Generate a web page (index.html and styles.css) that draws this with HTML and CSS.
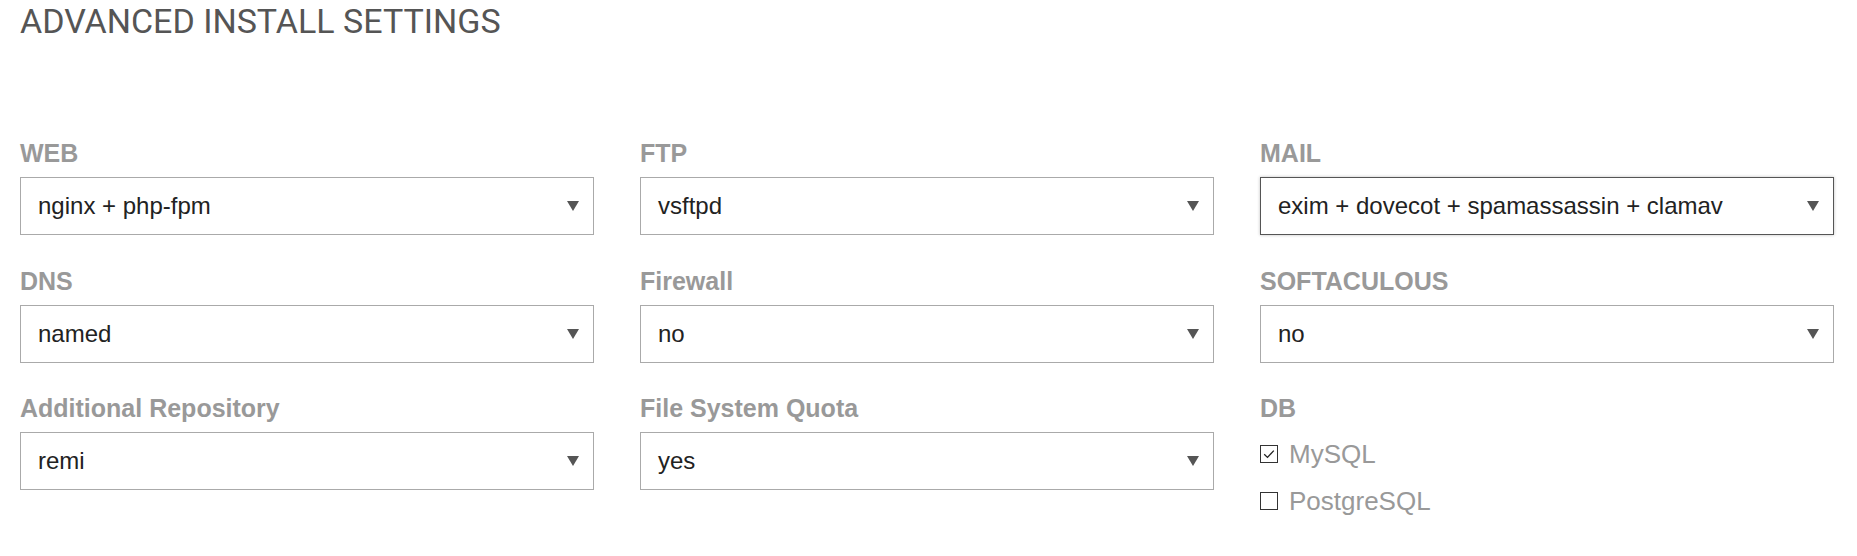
FILE: index.html
```html
<!DOCTYPE html>
<html>
<head>
<meta charset="utf-8">
<link rel="stylesheet" href="styles.css">
</head>
<body>
<div class="page">
  <h1 class="title">ADVANCED INSTALL SETTINGS</h1>
  <div class="grid">
    <div class="field">
      <div class="label">WEB</div>
      <div class="select"><span>nginx + php-fpm</span><svg class="arrow" viewBox="0 0 12 10" width="12" height="10"><path d="M0 0H12L6 10Z"/></svg></div>
    </div>
    <div class="field">
      <div class="label">FTP</div>
      <div class="select"><span>vsftpd</span><svg class="arrow" viewBox="0 0 12 10" width="12" height="10"><path d="M0 0H12L6 10Z"/></svg></div>
    </div>
    <div class="field">
      <div class="label">MAIL</div>
      <div class="select focused"><span>exim + dovecot + spamassassin + clamav</span><svg class="arrow" viewBox="0 0 12 10" width="12" height="10"><path d="M0 0H12L6 10Z"/></svg></div>
    </div>
    <div class="field">
      <div class="label">DNS</div>
      <div class="select"><span>named</span><svg class="arrow" viewBox="0 0 12 10" width="12" height="10"><path d="M0 0H12L6 10Z"/></svg></div>
    </div>
    <div class="field">
      <div class="label">Firewall</div>
      <div class="select"><span>no</span><svg class="arrow" viewBox="0 0 12 10" width="12" height="10"><path d="M0 0H12L6 10Z"/></svg></div>
    </div>
    <div class="field">
      <div class="label">SOFTACULOUS</div>
      <div class="select"><span>no</span><svg class="arrow" viewBox="0 0 12 10" width="12" height="10"><path d="M0 0H12L6 10Z"/></svg></div>
    </div>
    <div class="field">
      <div class="label">Additional Repository</div>
      <div class="select"><span>remi</span><svg class="arrow" viewBox="0 0 12 10" width="12" height="10"><path d="M0 0H12L6 10Z"/></svg></div>
    </div>
    <div class="field">
      <div class="label">File System Quota</div>
      <div class="select"><span>yes</span><svg class="arrow" viewBox="0 0 12 10" width="12" height="10"><path d="M0 0H12L6 10Z"/></svg></div>
    </div>
    <div class="field">
      <div class="label">DB</div>
      <div class="checks">
        <label class="check"><span class="box"><svg viewBox="0 0 16 16" width="16" height="16"><path d="M3.2 8.2L6.5 11.4L12.8 4.6" fill="none" stroke="#222" stroke-width="1.3"/></svg></span><span class="check-text">MySQL</span></label>
        <label class="check"><span class="box"></span><span class="check-text">PostgreSQL</span></label>
      </div>
    </div>
  </div>
</div>
</body>
</html>
```
FILE: styles.css
```css
html, body {
  margin: 0;
  padding: 0;
  background: #fff;
}
.page {
  padding: 2px 0 0 20px;
  font-family: "Liberation Sans", Arial, sans-serif;
}
.title {
  margin: 0;
  font-family: Roboto, "Liberation Sans", sans-serif;
  font-weight: 400;
  font-size: 34px;
  line-height: 39px;
  color: #555;
}
.grid {
  margin-top: 98px;
  display: grid;
  grid-template-columns: repeat(3, 574px);
  column-gap: 46px;
  row-gap: 31.5px;
}
.field {
  display: flex;
  flex-direction: column;
}
.label {
  font-weight: 700;
  font-size: 25px;
  line-height: 28px;
  color: #999;
  margin-bottom: 10px;
}
.select {
  box-sizing: border-box;
  height: 58px;
  border: 1px solid #aaa;
  background: #fff;
  display: flex;
  align-items: center;
  justify-content: space-between;
  padding: 0 14px 0 17px;
  font-size: 24px;
  color: #222;
}
.select.focused {
  border-color: #555;
  box-shadow: 0 0 3px rgba(0,0,0,0.25);
}
.arrow {
  fill: #555;
  width: 12px;
  height: 10px;
}
.checks {
  display: flex;
  flex-direction: column;
  gap: 15px;
  padding-top: 6px;
}
.check {
  display: flex;
  align-items: center;
  gap: 11px;
  font-size: 26px;
  color: #999;
  height: 32px;
}
.box {
  box-sizing: border-box;
  width: 18px;
  height: 18px;
  border: 1px solid #333;
  background: #fff;
  display: flex;
  align-items: center;
  justify-content: center;
}
.box svg {
  width: 16px;
  height: 16px;
}
```
